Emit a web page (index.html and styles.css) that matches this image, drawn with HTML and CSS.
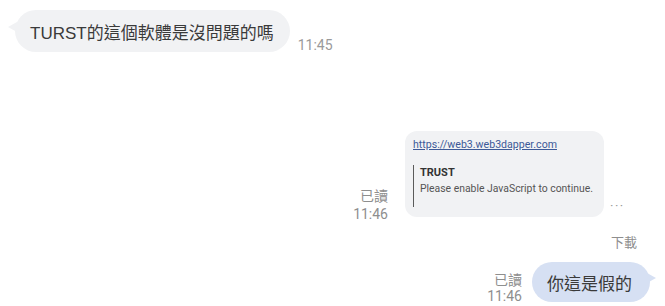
FILE: index.html
```html
<!DOCTYPE html>
<html lang="zh-Hant">
<head>
<meta charset="utf-8">
<link rel="stylesheet" href="styles.css">
</head>
<body>
<div class="chat">
  <div class="row row-in">
    <div class="bubble bubble-in">TURST的這個軟體是沒問題的嗎</div>
    <div class="time">11:45</div>
  </div>

  <div class="row row-out row-card">
    <div class="meta meta-card">
      <div>已讀</div>
      <div>11:46</div>
    </div>
    <div class="card">
      <div class="link">https://web3.web3dapper.com</div>
      <div class="quote">
        <div class="quote-title">TRUST</div>
        <div class="quote-desc">Please enable JavaScript to continue.</div>
      </div>
    </div>
    <div class="more">···</div>
  </div>

  <div class="download">下載</div>

  <div class="row row-out row-last">
    <div class="meta meta-last">
      <div>已讀</div>
      <div>11:46</div>
    </div>
    <div class="bubble bubble-out">你這是假的</div>
  </div>
</div>
</body>
</html>
```

FILE: styles.css
```css
html, body {
  margin: 0;
  padding: 0;
  background: #ffffff;
}

body {
  width: 665px;
  height: 306px;
  overflow: hidden;
  font-family: Roboto, "Noto Sans CJK TC", sans-serif;
  color: #333333;
}

.chat {
  display: flex;
  flex-direction: column;
}

.row {
  display: flex;
  align-items: flex-end;
}

.row-in {
  padding: 10px 0 0 15px;
}

.row-out {
  justify-content: flex-end;
}

.bubble {
  position: relative;
  height: 42px;
  border-radius: 21px;
  display: flex;
  align-items: center;
  font-size: 17px;
  color: #3a3a3a;
  white-space: nowrap;
}

.bubble-in {
  background: #f1f2f4;
  padding: 0 16px 0 15px;
  font-family: "Liberation Sans", "Noto Sans CJK TC", sans-serif;
}

.bubble-in::before {
  content: "";
  position: absolute;
  left: -7px;
  top: 12px;
  border-top: 5px solid transparent;
  border-bottom: 5px solid transparent;
  border-right: 9px solid #f1f2f4;
}

.time {
  font-size: 14px;
  color: #9a9a9a;
  margin-left: 8px;
  line-height: 18px;
  margin-bottom: -2px;
}

.row-card {
  margin-top: 79px;
  padding-right: 38px;
}

.meta {
  display: flex;
  flex-direction: column;
  align-items: flex-end;
  font-size: 14px;
  color: #8e8e8e;
}

.meta-card {
  line-height: 18px;
  margin-right: 17px;
  margin-bottom: -6px;
}

.card {
  width: 183px;
  background: #f1f2f4;
  border-radius: 12px;
  padding: 6px 8px 10px 8px;
}

.link {
  font-size: 10.6px;
  line-height: 15px;
  color: #3d5a98;
  text-decoration: underline;
  white-space: nowrap;
}

.quote {
  margin-top: 13px;
  border-left: 1px solid #5a5a5a;
  padding: 0 0 10px 6px;
  font-size: 11px;
  line-height: 16px;
}

.quote-title {
  font-weight: bold;
  color: #333333;
}

.quote-desc {
  color: #555555;
  white-space: nowrap;
  font-size: 10.4px;
}

.more {
  width: 17px;
  margin-left: 6px;
  font-size: 13px;
  letter-spacing: 1.5px;
  color: #9a9a9a;
  line-height: 12px;
  margin-bottom: 5px;
}

.download {
  margin-top: 18px;
  padding-right: 28px;
  text-align: right;
  font-size: 13px;
  line-height: 16px;
  color: #8e8e8e;
}

.row-last {
  margin-top: 11px;
  padding-right: 15px;
}

.meta-last {
  line-height: 16px;
  margin-right: 10px;
  margin-bottom: -2px;
}

.bubble-out {
  background: #d6e0f3;
  height: 40px;
  border-radius: 20px;
  padding: 0 18px 0 15px;
}

.bubble-out::after {
  content: "";
  position: absolute;
  right: -6px;
  top: 11px;
  border-top: 5px solid transparent;
  border-bottom: 5px solid transparent;
  border-left: 9px solid #d6e0f3;
}
```
